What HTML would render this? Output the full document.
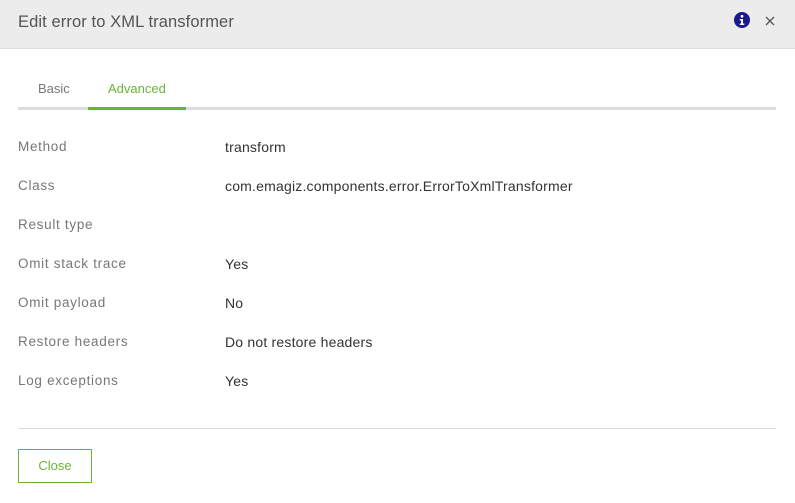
<!DOCTYPE html>
<html><head><style>
body{margin:0;width:795px;height:503px;background:#fff;font-family:"Liberation Sans",sans-serif;position:relative;overflow:hidden}
.hdr{position:absolute;left:0;top:0;width:795px;height:48px;background:#ececec;border-bottom:1px solid #ddd}
.title{position:absolute;left:18px;top:13px;font-size:16.5px;color:#555;letter-spacing:0.1px}
.tabs{position:absolute;left:18px;top:107px;width:758px;height:3px;background:#ddd}
.act{position:absolute;left:88px;top:107px;width:98px;height:3px;background:#6bb535}
.t{position:absolute;top:81px;font-size:13px}
.l{position:absolute;left:18px;font-size:13.5px;color:#777;letter-spacing:0.7px}
.v{position:absolute;left:225px;font-size:14px;color:#333;letter-spacing:0.2px}
.div{position:absolute;left:18px;top:428px;width:758px;height:1px;background:#ddd}
.btn{position:absolute;left:18px;top:449px;width:72px;height:32px;border:1px solid #6bb535;color:#6bb535;font-size:13px;text-align:center;line-height:32px}
</style></head><body>
<div class="hdr"><div class="title">Edit error to XML transformer</div>
<svg style="position:absolute;left:734px;top:12px" width="16" height="16" viewBox="0 0 16 16"><circle cx="8" cy="8" r="8" fill="#1a1a8c"/><circle cx="8" cy="4.3" r="1.4" fill="#fff"/><path d="M5.8 7h3.2v4.5h1.3v1.5H5.8v-1.5h1.3V8.5H5.8z" fill="#fff"/></svg>
<svg style="position:absolute;left:765px;top:16px" width="10" height="10" viewBox="0 0 10 10"><path d="M1 1L9 9M9 1L1 9" stroke="#555" stroke-width="1.3"/></svg>
</div>
<div class="t" style="left:38px;color:#777">Basic</div>
<div class="t" style="left:108px;color:#6bb535">Advanced</div>
<div class="tabs"></div><div class="act"></div>
<div class="l" style="top:139px">Method</div><div class="v" style="top:139px">transform</div>
<div class="l" style="top:178px">Class</div><div class="v" style="top:178px">com.emagiz.components.error.ErrorToXmlTransformer</div>
<div class="l" style="top:217px">Result type</div>
<div class="l" style="top:256px">Omit stack trace</div><div class="v" style="top:256px">Yes</div>
<div class="l" style="top:295px">Omit payload</div><div class="v" style="top:295px">No</div>
<div class="l" style="top:334px">Restore headers</div><div class="v" style="top:334px">Do not restore headers</div>
<div class="l" style="top:373px">Log exceptions</div><div class="v" style="top:373px">Yes</div>
<div class="div"></div>
<div class="btn">Close</div>
</body></html>
